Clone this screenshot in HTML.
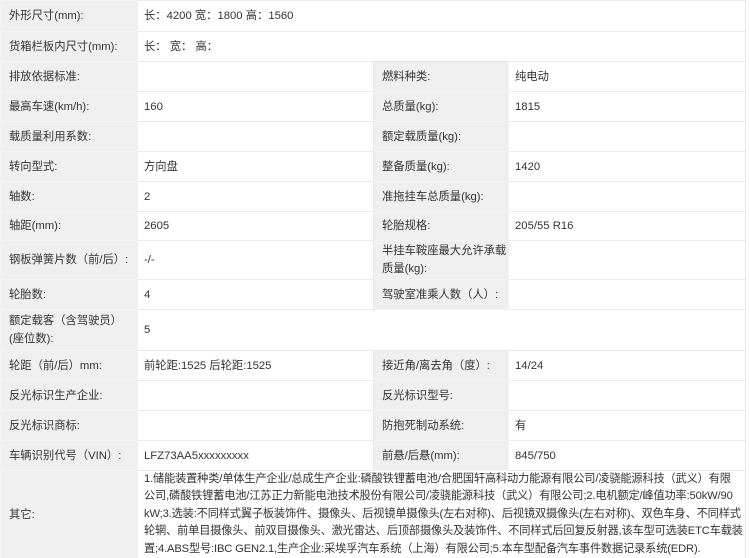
<!DOCTYPE html>
<html><head><meta charset="utf-8"><style>
html,body{margin:0;padding:0;background:#fff;width:750px;height:558px;overflow:hidden}
table{border-collapse:collapse;table-layout:fixed;width:745px;font-family:"Liberation Sans","Noto Sans CJK SC",sans-serif;font-size:11.3px;color:#333}
td{border:1px solid #e9e9e9;padding:0 0 0 6px;line-height:18px;vertical-align:middle;overflow:hidden;white-space:nowrap}
td.l{background:#efefef;padding-left:8px;border-color:#f3f3f3}
td.v{background:#fff}
tr{height:30px}
</style></head><body>
<table>
<colgroup><col style="width:137px"><col style="width:236px"><col style="width:135px"><col style="width:237px"></colgroup>
<tr style="height:31px"><td class="l">外形尺寸(mm):</td><td class="v" colspan="3">长：4200 宽：1800 高：1560</td></tr>
<tr><td class="l">货箱栏板内尺寸(mm):</td><td class="v" colspan="3">长： 宽： 高：</td></tr>
<tr><td class="l">排放依据标准:</td><td class="v"></td><td class="l">燃料种类:</td><td class="v">纯电动</td></tr>
<tr><td class="l">最高车速(km/h):</td><td class="v">160</td><td class="l">总质量(kg):</td><td class="v">1815</td></tr>
<tr><td class="l">载质量利用系数:</td><td class="v"></td><td class="l">额定载质量(kg):</td><td class="v"></td></tr>
<tr><td class="l">转向型式:</td><td class="v">方向盘</td><td class="l">整备质量(kg):</td><td class="v">1420</td></tr>
<tr><td class="l">轴数:</td><td class="v">2</td><td class="l">准拖挂车总质量(kg):</td><td class="v"></td></tr>
<tr style="height:29px"><td class="l">轴距(mm):</td><td class="v">2605</td><td class="l">轮胎规格:</td><td class="v">205/55 R16</td></tr>
<tr style="height:39px"><td class="l">钢板弹簧片数（前/后）:</td><td class="v">-/-</td><td class="l">半挂车鞍座最大允许承载<br>质量(kg):</td><td class="v"></td></tr>
<tr><td class="l">轮胎数:</td><td class="v">4</td><td class="l">驾驶室准乘人数（人）:</td><td class="v"></td></tr>
<tr style="height:41px"><td class="l">额定载客（含驾驶员）<br>(座位数):</td><td class="v" colspan="3">5</td></tr>
<tr><td class="l">轮距（前/后）mm:</td><td class="v">前轮距:1525 后轮距:1525</td><td class="l">接近角/离去角（度）:</td><td class="v">14/24</td></tr>
<tr><td class="l">反光标识生产企业:</td><td class="v"></td><td class="l">反光标识型号:</td><td class="v"></td></tr>
<tr><td class="l">反光标识商标:</td><td class="v"></td><td class="l">防抱死制动系统:</td><td class="v">有</td></tr>
<tr><td class="l">车辆识别代号（VIN）:</td><td class="v">LFZ73AA5xxxxxxxxx</td><td class="l">前悬/后悬(mm):</td><td class="v">845/750</td></tr>
<tr style="height:88px"><td class="l">其它:</td><td class="v" colspan="3" style="line-height:17.4px;font-size:11.2px;letter-spacing:-0.15px">1.储能装置种类/单体生产企业/总成生产企业:磷酸铁锂蓄电池/合肥国轩高科动力能源有限公司/凌骁能源科技（武义）有限<br>公司,磷酸铁锂蓄电池/江苏正力新能电池技术股份有限公司/凌骁能源科技（武义）有限公司;2.电机额定/峰值功率:50kW/90<br>kW;3.选装:不同样式翼子板装饰件、摄像头、后视镜单摄像头(左右对称)、后视镜双摄像头(左右对称)、双色车身、不同样式<br>轮辋、前单目摄像头、前双目摄像头、激光雷达、后顶部摄像头及装饰件、不同样式后回复反射器,该车型可选装ETC车载装<br>置;4.ABS型号:IBC GEN2.1,生产企业:采埃孚汽车系统（上海）有限公司;5.本车型配备汽车事件数据记录系统(EDR).</td></tr>
</table>
</body></html>
